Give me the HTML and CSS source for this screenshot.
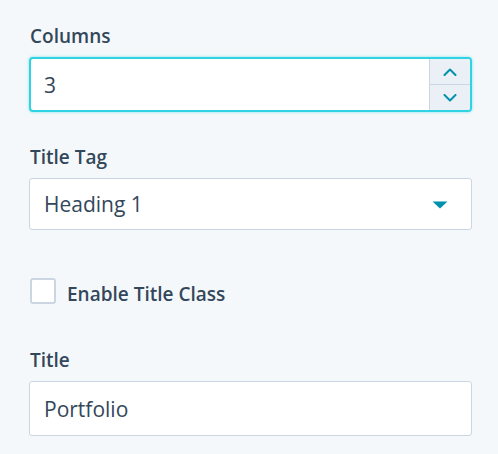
FILE: index.html
```html
<!DOCTYPE html>
<html>
<head>
<meta charset="utf-8">
<link rel="stylesheet" href="styles.css">
</head>
<body>
<div class="panel">
  <div class="field">
    <div class="label">Columns</div>
    <div class="input focused number">
      <span class="value">3</span>
      <div class="spinner">
        <div class="spin-btn">
          <svg width="14" height="8" viewBox="0 0 14 8"><path d="M1.5 7 L7 1.5 L12.5 7" fill="none" stroke="#0091ae" stroke-width="2" stroke-linecap="round" stroke-linejoin="round"/></svg>
        </div>
        <div class="spin-btn">
          <svg width="14" height="8" viewBox="0 0 14 8"><path d="M1.5 1 L7 6.5 L12.5 1" fill="none" stroke="#0091ae" stroke-width="2" stroke-linecap="round" stroke-linejoin="round"/></svg>
        </div>
      </div>
    </div>
  </div>

  <div class="field field-tag">
    <div class="label">Title Tag</div>
    <div class="input select">
      <span class="value">Heading 1</span>
      <svg class="caret" width="16" height="8" viewBox="0 0 16 8"><path d="M0.5 0.5 L15.5 0.5 L8 7.5 Z" fill="#0091ae"/></svg>
    </div>
  </div>

  <div class="check-row">
    <span class="checkbox"></span>
    <span class="check-label">Enable Title Class</span>
  </div>

  <div class="field field-title">
    <div class="label">Title</div>
    <div class="input text">
      <span class="value">Portfolio</span>
    </div>
  </div>
</div>
</body>
</html>
```

FILE: styles.css
```css
html, body {
  margin: 0;
  padding: 0;
  background: #f5f8fa;
}
body {
  font-family: "Open Sans", "Noto Sans", sans-serif;
  color: #33475b;
}
.panel {
  padding: 24px 26px 0 29px;
  display: flex;
  flex-direction: column;
}
.label {
  font-size: 19px;
  font-weight: 600;
  line-height: 24px;
  margin-left: 1px;
  margin-bottom: 9px;
}
.input {
  box-sizing: border-box;
  background: #fff;
  border: 1px solid #cbd6e2;
  border-radius: 3px;
  display: flex;
  align-items: center;
  font-size: 21px;
  line-height: 28px;
}
.input .value {
  flex: 1;
  padding-left: 14px;
}
.input.focused {
  border: 2px solid #2fd3e2;
  box-shadow: 0 0 3px 0 rgba(0, 208, 228, 0.5);
  border-radius: 4px;
  height: 55px;
  align-items: stretch;
  overflow: hidden;
}
.input.number .value {
  display: flex;
  align-items: center;
  padding-left: 13px;
}
.spinner {
  width: 40px;
  display: flex;
  flex-direction: column;
  background: #eaf0f6;
  border-left: 1px solid #cbd6e2;
}
.spin-btn {
  flex: 1;
  display: flex;
  align-items: center;
  justify-content: center;
}
.spin-btn + .spin-btn {
  border-top: 1px solid #cbd6e2;
}
.field-tag {
  margin-top: 33px;
}
.input.select {
  height: 52px;
}
.caret {
  margin-right: 23px;
  margin-top: 1px;
}
.check-row {
  margin-top: 48px;
  display: flex;
  align-items: flex-start;
  margin-left: 1px;
}
.checkbox {
  box-sizing: border-box;
  width: 26px;
  height: 26px;
  background: #fff;
  border: 2px solid #cbd6e2;
  border-radius: 3px;
}
.check-label {
  margin-left: 11px;
  margin-top: 4px;
  font-size: 19px;
  font-weight: 600;
  line-height: 24px;
}
.field-title {
  margin-top: 42px;
}
.input.text {
  height: 55px;
}
```
